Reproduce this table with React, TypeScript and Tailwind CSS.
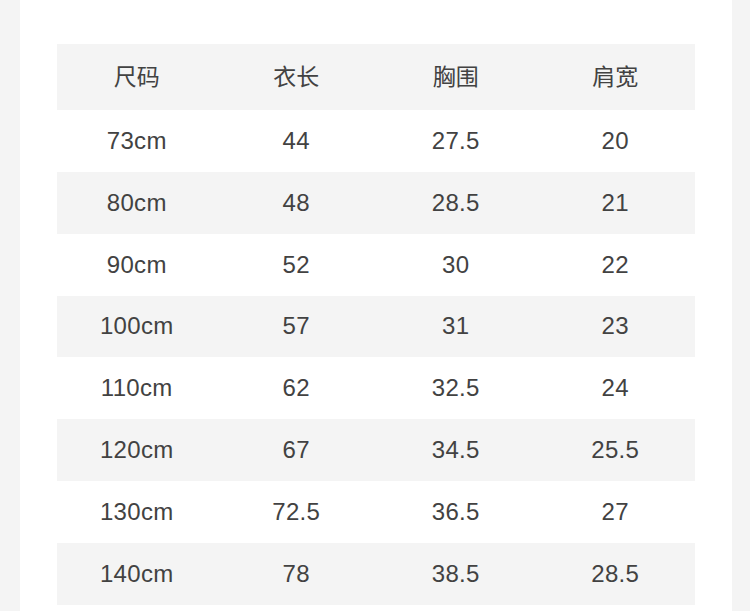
const header = ['尺码', '衣长', '胸围', '肩宽'];

const rows = [
  ['73cm', '44', '27.5', '20'],
  ['80cm', '48', '28.5', '21'],
  ['90cm', '52', '30', '22'],
  ['100cm', '57', '31', '23'],
  ['110cm', '62', '32.5', '24'],
  ['120cm', '67', '34.5', '25.5'],
  ['130cm', '72.5', '36.5', '27'],
  ['140cm', '78', '38.5', '28.5'],
];

export default function App() {
  return (
    <div className="w-[750px] h-[611px] bg-[#f4f4f4] pl-[20px] pr-[18px] overflow-hidden">
      <div className="h-full bg-white pt-[44px] px-[37px] font-['Liberation_Sans','Noto_Sans_CJK_SC',sans-serif] text-[#424242]">
        <div className="grid grid-cols-4 h-[66px] bg-[#f4f4f4] items-center text-[23px]">
          {header.map((h) => (
            <div key={h} className="text-center">
              {h}
            </div>
          ))}
        </div>
        {rows.map((r, i) => (
          <div
            key={r[0]}
            className={`grid grid-cols-4 h-[61.85px] items-center text-[24px] ${
              i % 2 === 1 ? 'bg-[#f4f4f4]' : 'bg-white'
            }`}
          >
            {r.map((c, j) => (
              <div key={j} className="text-center tracking-[0.3px]">
                {c}
              </div>
            ))}
          </div>
        ))}
      </div>
    </div>
  );
}
